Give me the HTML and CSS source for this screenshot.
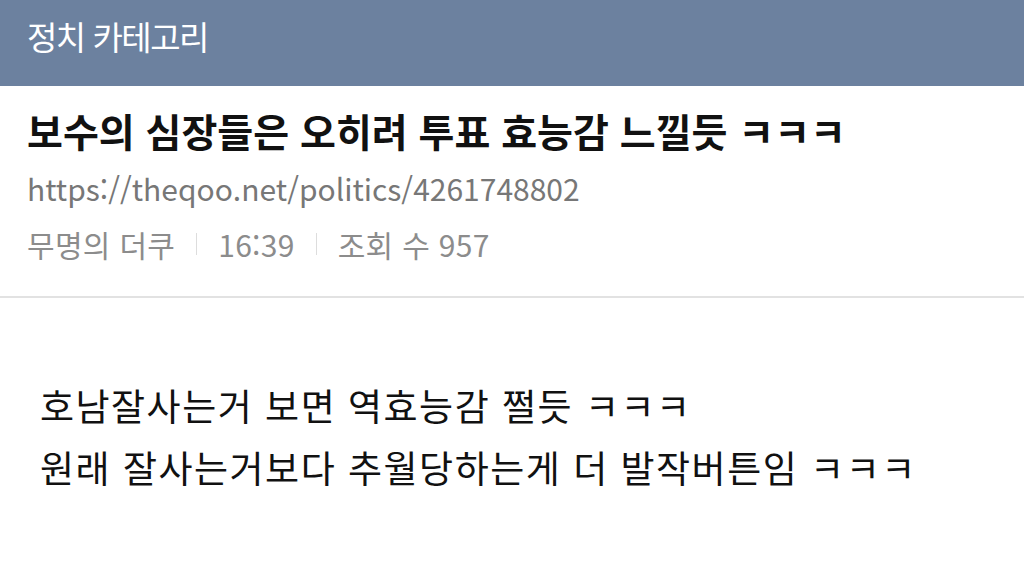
FILE: index.html
```html
<!DOCTYPE html>
<html lang="ko">
<head>
    <meta charset="utf8"/>
    <link rel="stylesheet" href="styles.css">
</head>
<body>
<div class="topbar">정치 카테고리</div>
<div class="head">
    <h1 class="title">보수의 심장들은 오히려 투표 효능감 느낄듯 ㅋㅋㅋ</h1>
    <div class="url">https://theqoo.net/politics/4261748802</div>
    <div class="meta">
        <span>무명의 더쿠</span>
        <span class="bar"></span>
        <span>16:39</span>
        <span class="bar"></span>
        <span>조회 수 957</span>
    </div>
</div>
<div class="content">
    <p>호남잘사는거 보면 역효능감 쩔듯 ㅋㅋㅋ</p>
    <p>원래 잘사는거보다 추월당하는게 더 발작버튼임 ㅋㅋㅋ</p>
</div>
</body>
</html>
```

FILE: styles.css
```css
body {
    margin: 0;
    background: #fff;
    font-family: "Noto Sans CJK KR", "Noto Sans", sans-serif;
}

.topbar {
    height: 86px;
    box-sizing: border-box;
    background: #6c819f;
    color: #fff;
    font-size: 33px;
    letter-spacing: -1.5px;
    line-height: 72px;
    padding-left: 27px;
}

.head {
    padding: 16px 27px 0;
    height: 212px;
    box-sizing: border-box;
    border-bottom: 2px solid #e2e2e2;
}

.title {
    margin: 0;
    font-size: 39px;
    font-weight: bold;
    line-height: 56px;
    color: #111;
}

.url {
    font-size: 30px;
    color: #777;
    line-height: 56px;
    margin-top: 2px;
}

.meta {
    font-size: 30px;
    letter-spacing: 0.3px;
    color: #8c8c8c;
    line-height: 56px;
    display: flex;
    align-items: center;
    gap: 21px;
}

.bar {
    width: 1px;
    height: 22px;
    background: #ddd;
}

.content {
    padding: 76px 40px 0;
}

.content p {
    margin: 0;
    font-size: 37px;
    letter-spacing: 1.5px;
    line-height: 62px;
    color: #111;
}
```
